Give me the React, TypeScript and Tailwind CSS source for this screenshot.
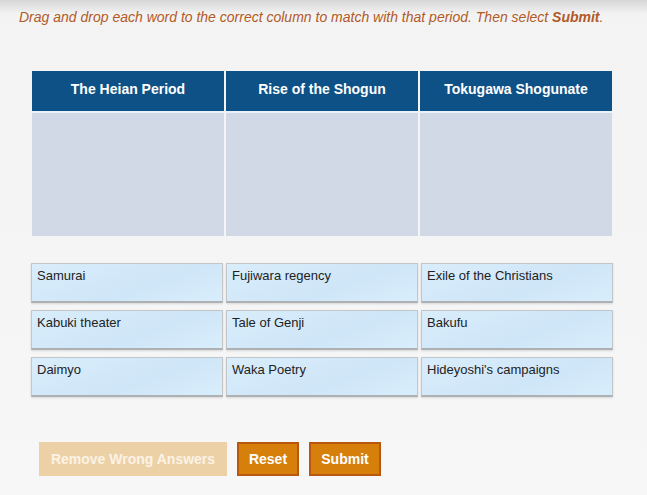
import React from 'react';

const columns = ['The Heian Period', 'Rise of the Shogun', 'Tokugawa Shogunate'];

const words = [
  'Samurai',
  'Fujiwara regency',
  'Exile of the Christians',
  'Kabuki theater',
  'Tale of Genji',
  'Bakufu',
  'Daimyo',
  'Waka Poetry',
  "Hideyoshi's campaigns",
];

const App = () => {
  return (
    <div
      className="w-[647px] h-[495px] overflow-hidden bg-[linear-gradient(to_bottom,#d6d6d6,#f3f3f3_14px,#f7f7f7)] text-[#222]"
      style={{ fontFamily: '"Liberation Sans", Arial, sans-serif' }}
    >
      {/* instructions */}
      <p className="pl-[19px] pt-[9px] text-[14px] leading-[17px] italic text-[#b15a27]">
        Drag and drop each word to the correct column to match with that period. Then select{' '}
        <span className="font-bold">Submit</span>.
      </p>

      {/* drop table */}
      <div className="ml-[32px] mt-[45px] w-[580px] grid grid-cols-3 gap-x-[2px]">
        {columns.map((col) => (
          <div key={col} className="flex flex-col">
            <div className="h-[40px] pb-[4px] bg-[#0d5186] flex items-center justify-center text-white font-bold text-[14px]">
              {col}
            </div>
            <div className="h-[2px] bg-[#e9f3fa]" />
            <div className="h-[123px] bg-[#d1d8e6]" />
          </div>
        ))}
      </div>

      {/* word bank */}
      <div className="ml-[31px] mt-[27px] w-[582px] grid grid-cols-3 gap-x-[3px] gap-y-[7px]">
        {words.map((w) => (
          <div
            key={w}
            className="h-[40px] border border-[#c3c6c9] border-b-[2px] border-b-[#aeb1b4] bg-[linear-gradient(160deg,#d9edfb,#cfe6f8_60%,#d9eefc)] shadow-[0_1px_2px_rgba(0,0,0,0.12)] pl-[5px] pt-[4px] text-[13px] leading-[16px] text-[#222]"
          >
            {w}
          </div>
        ))}
      </div>

      {/* buttons */}
      <div className="ml-[39px] mt-[45px] flex gap-[10px]">
        <button className="h-[34px] w-[188px] bg-[#edd1a6] text-[#fbf3e6] font-bold text-[14px]">
          Remove Wrong Answers
        </button>
        <button className="h-[34px] w-[62px] bg-[#d6800b] border-2 border-[#b9560f] text-white font-bold text-[14px]">
          Reset
        </button>
        <button className="h-[34px] w-[72px] bg-[#d6800b] border-2 border-[#b9560f] text-white font-bold text-[14px]">
          Submit
        </button>
      </div>
    </div>
  );
};

export default App;
